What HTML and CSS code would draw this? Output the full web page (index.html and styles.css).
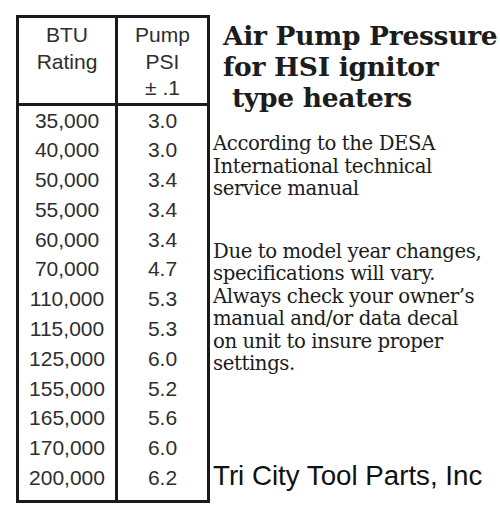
FILE: index.html
```html
<!DOCTYPE html>
<html lang="en">
<head>
    <meta charset="UTF-8">
    <meta name="viewport" content="width=device-width, initial-scale=1.0">
    <title>Air Pump Pressure</title>
    <link rel="stylesheet" href="styles.css">
</head>
<body>
    <div class="sheet">
        <table class="psi-table">
            <thead>
                <tr>
                    <th class="col-btu">BTU<br>Rating</th>
                    <th class="col-psi">Pump<br>PSI<br>± .1</th>
                </tr>
            </thead>
            <tbody>
                <tr><td>35,000</td><td>3.0</td></tr>
                <tr><td>40,000</td><td>3.0</td></tr>
                <tr><td>50,000</td><td>3.4</td></tr>
                <tr><td>55,000</td><td>3.4</td></tr>
                <tr><td>60,000</td><td>3.4</td></tr>
                <tr><td>70,000</td><td>4.7</td></tr>
                <tr><td>110,000</td><td>5.3</td></tr>
                <tr><td>115,000</td><td>5.3</td></tr>
                <tr><td>125,000</td><td>6.0</td></tr>
                <tr><td>155,000</td><td>5.2</td></tr>
                <tr><td>165,000</td><td>5.6</td></tr>
                <tr><td>170,000</td><td>6.0</td></tr>
                <tr class="last-row"><td>200,000</td><td>6.2</td></tr>
            </tbody>
        </table>

        <div class="notes">
            <h1>Air Pump Pressure<br>for HSI ignitor<br>&nbsp;type heaters</h1>
            <p>According to the DESA<br>International technical<br>service manual</p>
            <p class="warning">Due to model year changes,<br>specifications will vary.<br>Always check your owner’s<br>manual and/or data decal<br>on unit to insure proper<br>settings.</p>
            <div class="company">Tri City Tool Parts, Inc</div>
        </div>
    </div>
</body>
</html>
```

FILE: styles.css
```css
:root {
    --ink: #1c1c1c;
    --table-ink: #2e2e2e;
    --rule: #1a1a1a;
}

body {
    margin: 0;
    padding: 15px 0 0 16px;
    background-color: #ffffff;
    color: var(--ink);
}

.sheet {
    display: flex;
    gap: 3px;
}

.psi-table {
    border-collapse: collapse;
    border: 3px solid var(--rule);
    font-family: "Liberation Sans", Arial, sans-serif;
    font-size: 21px;
    color: var(--table-ink);
    text-align: center;
}

.psi-table th {
    font-weight: normal;
    vertical-align: top;
    line-height: 26.5px;
    padding: 4px 0 1px;
    border-bottom: 3px solid var(--rule);
}

.psi-table td {
    line-height: 29.8px;
    padding: 0;
}

.col-btu,
.psi-table td:first-child {
    width: 96px;
    border-right: 3px solid var(--rule);
}

.col-psi {
    width: 89px;
}

.psi-table .last-row td {
    padding-bottom: 7px;
}

.notes {
    display: flex;
    flex-direction: column;
    font-family: "DejaVu Serif", "Liberation Serif", serif;
}

.notes h1 {
    margin: 5px 0 0 10px;
    font-size: 26.5px;
    line-height: 31px;
    font-weight: bold;
    letter-spacing: -0.3px;
    white-space: nowrap;
}

.notes p {
    margin: 20px 0 0;
    font-size: 19.7px;
    line-height: 22.5px;
    letter-spacing: -0.4px;
    white-space: nowrap;
}

.notes .warning {
    margin-top: 40px;
}

.company {
    margin-top: auto;
    margin-bottom: 12px;
    font-family: "Liberation Sans", Arial, sans-serif;
    font-size: 27.7px;
    line-height: 30px;
    color: #111111;
    white-space: nowrap;
}
```
